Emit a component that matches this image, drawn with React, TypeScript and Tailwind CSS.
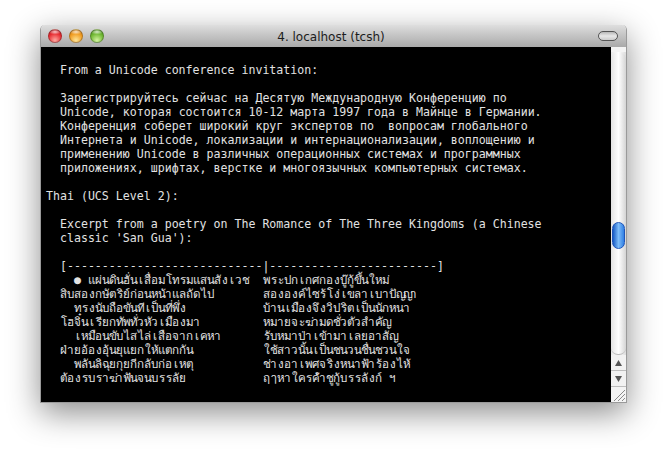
const russian = [
  'Зарегистрируйтесь сейчас на Десятую Международную Конференцию по',
  'Unicode, которая состоится 10-12 марта 1997 года в Майнце в Германии.',
  'Конференция соберет широкий круг экспертов по  вопросам глобального',
  'Интернета и Unicode, локализации и интернационализации, воплощению и',
  'применению Unicode в различных операционных системах и программных',
  'приложениях, шрифтах, верстке и многоязычных компьютерных системах.',
]

// indent is counted in terminal cells from the left text edge
const poem = [
  { indent: 4, left: '● แผ่นดินฮั่นเสื่อมโทรมแสนสังเวช', right: 'พระปกเกศกองบู๊กู้ขึ้นใหม่' },
  { indent: 2, left: 'สิบสองกษัตริย์ก่อนหน้าแลถัดไป', right: 'สององค์ไซร้โง่เขลาเบาปัญญา' },
  { indent: 4, left: 'ทรงนับถือขันทีเป็นที่พึ่ง', right: 'บ้านเมืองจึงวิปริตเป็นนักหนา' },
  { indent: 2, left: 'โฮจิ๋นเรียกทัพทั่วหัวเมืองมา', right: 'หมายจะฆ่ามดชั่วตัวสำคัญ' },
  { indent: 4, left: 'เหมือนขับไสไล่เสือจากเคหา', right: 'รับหมาป่าเข้ามาเลยอาสัญ' },
  { indent: 2, left: 'ฝ่ายอ้องอุ้นยุแยกให้แตกกัน', right: 'ใช้สาวนั้นเป็นชนวนชื่นชวนใจ' },
  { indent: 4, left: 'พลันลิฉุยกุยกีกลับก่อเหตุ', right: 'ช่างอาเพศจริงหนาฟ้าร้องไห้' },
  { indent: 2, left: 'ต้องรบราฆ่าฟันจนบรรลัย', right: 'ฤๅหาใครค้ำชูกู้บรรลังก์ ฯ' },
]

// Thai has no fixed pitch font here, so each base letter + marks gets a 7px cell
function ThaiCells({ text }: { text: string }) {
  const cells = text.match(/.[\u0E31\u0E34-\u0E3A\u0E47-\u0E4E]*/gu) ?? []
  return (
    <>
      {cells.map((c, i) => (
        <span key={i} className="inline-block w-[7px] text-center">
          {c === ' ' ? '\u00a0' : c}
        </span>
      ))}
    </>
  )
}

function Line({ children }: { children?: React.ReactNode }) {
  return <div className="h-[14px] whitespace-pre">{children ?? ' '}</div>
}

function TrafficLight({ color }: { color: string }) {
  return <span className={`size-[14px] rounded-full border border-black/25 ${color}`} />
}

function Scrollbar() {
  return (
    <div className="flex w-[15px] shrink-0 flex-col bg-gradient-to-r from-[#e8e8e8] via-white to-[#dcdcdc]">
      <div className="h-[5px] shrink-0 bg-[#f4f4f4]" />
      <div className="flex flex-1 flex-col items-center rounded-t-[7px] rounded-b-[7px] border-b border-[#bbbbbb] bg-gradient-to-r from-[#e4e4e4] via-white to-[#d4d4d4] pt-[170px]">
        <div className="h-[27px] w-[13px] rounded-[7px] border border-[#1f55b8] bg-gradient-to-r from-[#1559c4] via-[#7dbcf8] to-[#2f7fe4]" />
      </div>
      <div className="flex h-[16px] shrink-0 items-center justify-center border-b border-[#bdbdbd] bg-[#f2f2f2]">
        <svg width="7" height="6" viewBox="0 0 7 6"><path d="M3.5 0 7 6H0z" fill="#555" /></svg>
      </div>
      <div className="flex h-[16px] shrink-0 items-center justify-center border-b border-[#bdbdbd] bg-[#f2f2f2]">
        <svg width="7" height="6" viewBox="0 0 7 6"><path d="M0 0h7L3.5 6z" fill="#555" /></svg>
      </div>
      <div className="flex h-[15px] shrink-0 items-end justify-end bg-[#f4f4f4]">
        <svg width="14" height="14" viewBox="0 0 14 14" stroke="#8a8a8a">
          <path d="M13 2 2 13M13 6 6 13M13 10l-3 3" />
        </svg>
      </div>
    </div>
  )
}

export default function App() {
  return (
    <div className="h-[457px] w-full overflow-hidden bg-white pl-[40px] pt-[25px]">
      <div className="flex h-[378px] w-[587px] flex-col overflow-hidden rounded-t-[5px] border-x border-b border-[#9a9a9a] shadow-[0_10px_32px_rgba(0,0,0,0.45)]">
        <div className="relative flex h-[22px] shrink-0 items-center bg-gradient-to-b from-[#dedede] to-[#a9a9a9] pl-[7px]">
          <div className="flex gap-[7px]">
            <TrafficLight color="bg-[radial-gradient(ellipse_50%_22%_at_50%_16%,rgba(255,255,255,0.75),transparent),radial-gradient(circle_at_50%_85%,#ffa8a0,#e62a30_60%,#b02028)]" />
            <TrafficLight color="bg-[radial-gradient(ellipse_50%_22%_at_50%_16%,rgba(255,255,255,0.75),transparent),radial-gradient(circle_at_50%_85%,#ffe596,#f09a1e_60%,#c07a20)]" />
            <TrafficLight color="bg-[radial-gradient(ellipse_50%_22%_at_50%_16%,rgba(255,255,255,0.75),transparent),radial-gradient(circle_at_50%_85%,#d4f5a0,#6cb52f_60%,#4e8c26)]" />
          </div>
          <div className="flex-1 pr-[68px] pt-px text-center font-['DejaVu_Sans',sans-serif] text-[12px] text-[#1c1c1c]">
            4. localhost (tcsh)
          </div>
          <div className="absolute right-[8px] top-[6px] h-[10px] w-[20px] rounded-[5px] border border-[#555] bg-gradient-to-b from-[#b8b8b8] via-[#e8e8e8] to-[#cccccc]" />
        </div>
        <div className="flex min-h-0 flex-1">
          <div className="flex-1 overflow-hidden bg-black pl-[5px] pt-[2px] font-['DejaVu_Sans_Mono','Noto_Sans',monospace] text-[11.6px] leading-[14px] text-[#e2e2e2]">
            <Line />
            <Line>  From a Unicode conference invitation:</Line>
            <Line />
            {russian.map((t) => (
              <Line key={t}>  {t}</Line>
            ))}
            <Line />
            <Line>Thai (UCS Level 2):</Line>
            <Line />
            <Line>  Excerpt from a poetry on The Romance of The Three Kingdoms (a Chinese</Line>
            <Line>  classic 'San Gua'):</Line>
            <Line />
            <Line>  [----------------------------|------------------------]</Line>
            {poem.map((row) => (
              <div key={row.right} className="flex h-[14px] whitespace-pre">
                <div className={`w-[217px] shrink-0 ${row.indent === 4 ? 'pl-[28px]' : 'pl-[14px]'}`}>
                  <ThaiCells text={row.left} />
                </div>
                <div>
                  <ThaiCells text={row.right} />
                </div>
              </div>
            ))}
          </div>
          <Scrollbar />
        </div>
      </div>
    </div>
  )
}
